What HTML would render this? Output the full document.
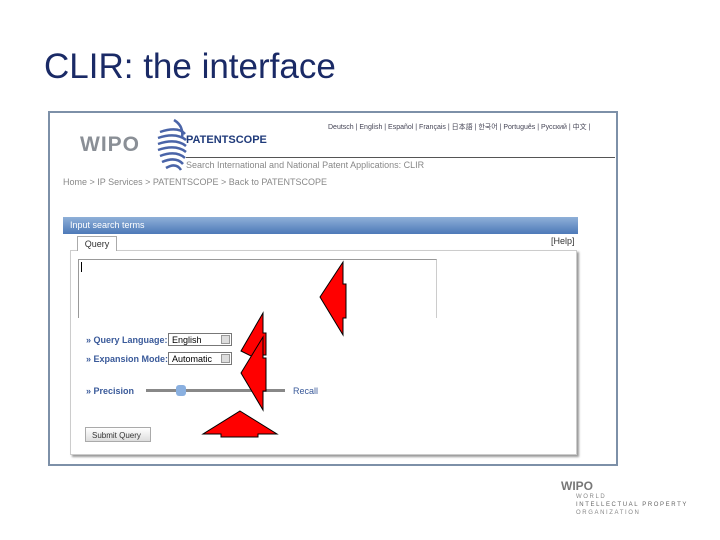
<!DOCTYPE html>
<html><head><style>
body{margin:0;width:720px;height:540px;background:#fff;position:relative;overflow:hidden;font-family:"Liberation Sans",sans-serif}
.a{position:absolute}
.t{font-size:11px;color:#888;white-space:nowrap}
.lab{font-size:9px;color:#3a5a9a;font-weight:bold;white-space:nowrap}
.sel{border:1px solid #777;background:#fff;font-size:9px;width:64px;height:13px;line-height:13px;padding-left:3px;box-sizing:border-box}
.sel:after{content:"";position:absolute;right:1px;top:1px;width:9px;height:9px;background:#ddd;border:1px solid #999;box-sizing:border-box}
</style></head><body>
<div class="a" style="left:44px;top:47px;font-size:35px;color:#1a2a66">CLIR: the interface</div>
<div class="a" style="left:48px;top:111px;width:566px;height:351px;border:2px solid #7d90a8"></div>
<div class="a" style="left:80px;top:133px;font-size:21px;font-weight:bold;color:#8a8f96;letter-spacing:1px">WIPO</div>
<svg class="a" style="left:152px;top:116px" width="36" height="56"><g stroke="#4a64a8" stroke-width="2.5" fill="none">
<path d="M22 4 Q32 10 30 22"/><path d="M8 16 Q26 10 33 18"/><path d="M6 22 Q24 16 34 24"/><path d="M6 28 Q24 22 34 30"/><path d="M6 34 Q24 28 34 36"/><path d="M8 40 Q24 34 33 42"/><path d="M10 46 Q24 40 31 48"/><path d="M14 52 Q24 46 29 54"/></g></svg>
<div class="a" style="left:186px;top:134px;font-size:11px;font-weight:bold;color:#1f3a7a">PATENTSCOPE</div>
<div class="a" style="left:186px;top:157px;width:429px;height:1px;background:#555"></div>
<div class="a t" style="left:186px;top:160px;font-size:9px">Search International and National Patent Applications: CLIR</div>
<div class="a t" style="left:328px;top:122px;font-size:7px;color:#445">Deutsch | English | Español | Français | 日本語 | 한국어 | Português | Русский | 中文 |</div>
<div class="a t" style="left:63px;top:177px;font-size:9px">Home > IP Services > PATENTSCOPE > Back to PATENTSCOPE</div>
<div class="a" style="left:63px;top:217px;width:515px;height:17px;background:linear-gradient(#8fb0d8,#4d79b8)"></div>
<div class="a" style="left:70px;top:220px;font-size:9px;color:#fff">Input search terms</div>
<div class="a" style="left:551px;top:236px;font-size:9px;color:#333">[Help]</div>
<div class="a" style="left:70px;top:250px;width:505px;height:203px;background:#fff;border:1px solid #ccc;box-shadow:2px 2px 2px #999"></div>
<div class="a" style="left:77px;top:236px;width:38px;height:14px;border:1px solid #aaa;border-bottom:none;background:#fff;font-size:9px;text-align:center;line-height:14px;color:#333">Query</div>
<div class="a" style="left:78px;top:259px;width:357px;height:58px;border:1px solid #999;border-bottom:none;border-right-color:#ccc"></div>
<div class="a" style="left:81px;top:262px;width:1px;height:10px;background:#000"></div>
<div class="a lab" style="left:86px;top:335px">» Query Language:</div>
<div class="a sel" style="left:168px;top:333px">English</div>
<div class="a lab" style="left:86px;top:354px">» Expansion Mode:</div>
<div class="a sel" style="left:168px;top:352px">Automatic</div>
<div class="a lab" style="left:86px;top:386px">» Precision</div>
<div class="a" style="left:146px;top:389px;width:139px;height:3px;background:#888"></div>
<div class="a" style="left:176px;top:385px;width:10px;height:11px;background:#8ab0e0;border-radius:3px"></div>
<div class="a lab" style="left:293px;top:386px;font-weight:normal">Recall</div>
<div class="a" style="left:85px;top:427px;width:66px;height:15px;border:1px solid #aaa;background:linear-gradient(#fff,#ddd);font-size:8px;line-height:15px;padding-left:6px;box-sizing:border-box;color:#333">Submit Query</div>
<svg class="a" style="left:0;top:0" width="720" height="540"><g fill="#f00" stroke="#000" stroke-width="1">
<polygon points="320,297 343,262 343,284 346,284 346,318 343,318 343,335"/>
<polygon points="241,351 263,313 263,333 266,333 266,355 263,355 263,362"/>
<polygon points="241,373 263,337 263,358 266,358 266,391 263,391 263,410"/>
<polygon points="240,411 277,434 258,434 258,437 221,437 221,434 203,434"/>
</g></svg>
<div class="a" style="left:561px;top:479px;font-size:12px;font-weight:bold;color:#777">WIPO</div>
<div class="a" style="left:576px;top:493px;font-size:6px;color:#888;line-height:8px;letter-spacing:1.6px">WORLD<br><span style="color:#666">INTELLECTUAL PROPERTY</span><br>ORGANIZATION</div>
</body></html>
